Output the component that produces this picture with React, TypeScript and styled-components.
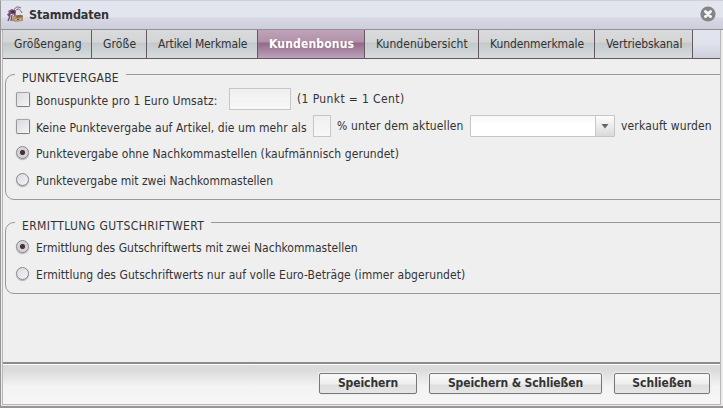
import React from "react";
import styled, { createGlobalStyle, css } from "styled-components";

const Global = createGlobalStyle`
  * { box-sizing: border-box; }
  html, body { margin: 0; width: 723px; height: 408px; overflow: hidden; }
  body { font: 12px/15px "DejaVu Sans Condensed", "DejaVu Sans", sans-serif; font-stretch: condensed; color: #333; }
`;

const Dialog = styled.div`
  width: 723px;
  height: 408px;
  display: flex;
  flex-direction: column;
  overflow: hidden;
  background: #979595;
`;

const TitleBar = styled.header`
  height: 30px;
  flex: none;
  display: flex;
  align-items: center;
  padding: 0 7px 2px 6px;
  border-left: 1px solid #999;
  border-top: 1px solid #d0d0d8;
  border-bottom: 1px solid #909296;
  background: linear-gradient(#e3e5ee 0, #e2e4ee 16px, #d7d8e3 17px, #cdcedb 28px);
`;

const Title = styled.h1`
  flex: 1;
  margin: 1px 0 0 5px;
  font-size: 12.5px;
  line-height: 16px;
  font-weight: bold;
  letter-spacing: -0.12px;
`;

const Frame = styled.div`
  height: 376px;
  flex: none;
  display: flex;
  padding: 0 2px 1px 1px;
  margin: 0 0 0 1px;
  background: #ececec;
`;

const Body = styled.div`
  flex: 1;
  min-width: 0;
  display: flex;
  flex-direction: column;
  border: 1px solid #b8b8b8;
  border-top: 0;
  background: #efefef;
  overflow: hidden;
`;

const Tabs = styled.nav`
  height: 29px;
  flex: none;
  display: flex;
  border-bottom: 1px solid #665860;
  background: linear-gradient(#e3e5ee 0, #e0e2ec 13px, #cdcfdb 28px);
`;

const Tab = styled.div<{ $w: number; $ls: number; $active?: boolean }>`
  width: ${(p) => p.$w}px;
  flex: none;
  padding: 7px 0 0 11px;
  border-right: 1px solid #665860;
  white-space: nowrap;
  letter-spacing: ${(p) => p.$ls}px;
  background: linear-gradient(#d8dadb 0, #d3d5d6 12px, #c3c9cb 13px, #d7dcdc 28px);
  ${(p) =>
    p.$active &&
    css`
      color: #fff;
      font-weight: bold;
      background: linear-gradient(#bfa2b9 0, #b191a8 12px, #946988 13px, #bba3bb 28px);
    `}
`;

const Content = styled.main`
  flex: 1;
  padding: 12px 0 0 2px;
`;

const Group = styled.fieldset<{ $h: number }>`
  position: relative;
  height: ${(p) => p.$h}px;
  width: 730px;
  margin: 0 0 19px;
  padding: 0 0 0 10px;
  border: 0;
  display: flex;
  flex-direction: column;
  &::before {
    content: "";
    position: absolute;
    inset: 3px 0 0 0;
    border: 1px solid #999;
    border-radius: 9px;
  }
`;

const Caption = styled.div<{ $w: number; $ls: number }>`
  position: relative;
  width: ${(p) => p.$w}px;
  height: 15px;
  flex: none;
  margin-bottom: 2px;
  padding-left: 7px;
  background: #efefef;
  letter-spacing: ${(p) => p.$ls}px;
  white-space: nowrap;
`;

const Line = styled.div`
  position: relative;
  height: 27px;
  flex: none;
  display: flex;
`;

const Text = styled.span<{ $w: number; $ls: number; $top?: number }>`
  width: ${(p) => p.$w}px;
  flex: none;
  padding-top: ${(p) => p.$top ?? 6}px;
  letter-spacing: ${(p) => p.$ls}px;
  white-space: nowrap;
`;

const Check = styled.i`
  width: 14px;
  height: 15px;
  flex: none;
  margin: 4px 6px 0 1px;
  border: 1px solid #7e8084;
  border-top-color: #a4a5a9;
  border-left-color: #97989c;
  border-radius: 2px;
  background: linear-gradient(135deg, #d9dadd, #f5f5f7);
  box-shadow: 0 0 1px #aaa;
`;

const Radio = styled.i<{ $on?: boolean }>`
  width: 13px;
  height: 13px;
  flex: none;
  margin: 4px 7px 0 1px;
  border: 1px solid #85868a;
  border-radius: 50%;
  background: ${(p) =>
    p.$on
      ? "radial-gradient(circle at 50% 50%, #3c363a 0 2.1px, #d5cbd2 3px, #dfd9de 6px)"
      : "linear-gradient(135deg, #d9dbdf, #f3f4f7)"};
  box-shadow: 0 1px 1px #aaa;
`;

const Field = styled.div<{ $w: number }>`
  width: ${(p) => p.$w}px;
  height: 22px;
  flex: none;
  margin-right: 6px;
  border: 1px solid #c6c6c6;
  background: linear-gradient(#efefef, #f8f8f8);
`;

const Select = styled(Field)`
  display: flex;
  justify-content: flex-end;
  border-radius: 1px;
  background: linear-gradient(#f7f7f7, #fff 9px);
`;

const Arrow = styled.span`
  width: 19px;
  border-left: 1px solid #c9c9c9;
  background: linear-gradient(#fdfdfd, #dadada);
  display: flex;
  align-items: center;
  justify-content: center;
`;

const Footer = styled.footer`
  height: 42px;
  flex: none;
  display: flex;
  gap: 12px;
  justify-content: flex-end;
  padding: 8px 10px 0 0;
  border-top: 2px solid #8c8c8c;
  box-shadow: inset 0 1px #fff;
  background: linear-gradient(#d9d9d9 0, #dcdcdc 7px, #f3f3f3 22px, #f6f6f6);
`;

const Button = styled.button<{ $w: number; $ls: number }>`
  width: ${(p) => p.$w}px;
  height: 21px;
  flex: none;
  margin: 1px 0 0;
  padding: 0;
  border: 1px solid #77787a;
  border-radius: 2px;
  background: linear-gradient(#fafafa, #eee 10px, #dedede 11px, #e6e6e6);
  box-shadow: 0 0 0 1px #eee;
  font: bold 12px/19px "DejaVu Sans Condensed", "DejaVu Sans", sans-serif;
  font-stretch: condensed;
  letter-spacing: ${(p) => p.$ls}px;
  color: #333;
  white-space: nowrap;
`;

const AntIcon = () => (
  <svg width="17" height="17" viewBox="0 0 17 17" fill="none">
    <path d="M7 5C8 1 10 0 14 2M8 6C10 1 13 3 15 7" stroke="#765472" strokeWidth="1" />
    <path d="M1 5L5 3L9 5L8.500 9L4 8L2 11L0.500 9L2 6Z" fill="#75506f" />
    <path d="M4 5L7 4.500L8 7L5 7Z" fill="#4f294c" />
    <path d="M0.500 8L3 10L1 15M5 9L4 15M8 8L6 15" stroke="#765070" strokeWidth="1.400" />
    <path d="M5 13L8 9L16 9V15L8 16Z" fill="#b39568" />
    <path d="M8 9C10 11 12 8 14 9L16 11L10 12Z" fill="#87654f" />
    <path d="M8 14L14 13" stroke="#d4bd91" />
    <path d="M10 13.500H12" stroke="#694b4c" />
  </svg>
);

const CloseIcon = () => (
  <svg width="16" height="16" viewBox="0 0 16 16">
    <circle cx="8" cy="8" r="7.600" fill="#858585" />
    <path d="M5.500 5.500L10.500 10.500M10.500 5.500L5.500 10.500" stroke="#f5f5f7" strokeWidth="3" strokeLinecap="round" />
  </svg>
);

const tabs: { label: string; w: number; ls: number; active?: boolean }[] = [
  { label: "Größengang", w: 89, ls: 0.1 },
  { label: "Größe", w: 55, ls: 0.15 },
  { label: "Artikel Merkmale", w: 111, ls: -0.13 },
  { label: "Kundenbonus", w: 107, ls: 0.18, active: true },
  { label: "Kundenübersicht", w: 114, ls: 0.05 },
  { label: "Kundenmerkmale", w: 116, ls: -0.08 },
  { label: "Vertriebskanal", w: 98, ls: -0.08 },
];

export default function App() {
  return (
    <Dialog>
      <Global />
      <TitleBar>
        <AntIcon />
        <Title>Stammdaten</Title>
        <CloseIcon />
      </TitleBar>
      <Frame>
        <Body>
          <Tabs>
            {tabs.map((t) => (
              <Tab key={t.label} $w={t.w} $ls={t.ls} $active={t.active}>
                {t.label}
              </Tab>
            ))}
          </Tabs>
          <Content>
            <Group $h={129}>
              <Caption $w={111} $ls={0.24}>PUNKTEVERGABE</Caption>
              <Line>
                <Check />
                <Text $w={193} $ls={0.12}>Bonuspunkte pro 1 Euro Umsatz:</Text>
                <Field $w={62} />
                <Text $w={120} $ls={0.38} $top={4}>(1 Punkt = 1 Cent)</Text>
              </Line>
              <Line>
                <Check />
                <Text $w={277} $ls={0.06}>Keine Punktevergabe auf Artikel, die um mehr als</Text>
                <Field $w={18} />
                <Text $w={133} $ls={0.14} $top={4}>% unter dem aktuellen</Text>
                <Select $w={145}>
                  <Arrow>
                    <svg width="8" height="5" viewBox="0 0 8 5">
                      <path d="M0.5 0H7.5L4 4.5Z" fill="#666" />
                    </svg>
                  </Arrow>
                </Select>
                <Text $w={95} $ls={0.16} $top={4}>verkauft wurden</Text>
              </Line>
              <Line>
                <Radio $on />
                <Text $w={400} $ls={0.07} $top={5}>Punktevergabe ohne Nachkommastellen (kaufmännisch gerundet)</Text>
              </Line>
              <Line>
                <Radio />
                <Text $w={400} $ls={0} $top={5}>Punktevergabe mit zwei Nachkommastellen</Text>
              </Line>
            </Group>
            <Group $h={75}>
              <Caption $w={196} $ls={0.4}>ERMITTLUNG GUTSCHRIFTWERT</Caption>
              <Line>
                <Radio $on />
                <Text $w={400} $ls={0.01} $top={5}>Ermittlung des Gutschriftwerts mit zwei Nachkommastellen</Text>
              </Line>
              <Line>
                <Radio />
                <Text $w={500} $ls={0.065} $top={5}>Ermittlung des Gutschriftwerts nur auf volle Euro-Beträge (immer abgerundet)</Text>
              </Line>
            </Group>
          </Content>
          <Footer>
            <Button $w={98} $ls={-0.08}>Speichern</Button>
            <Button $w={173} $ls={-0.1}>Speichern &amp; Schließen</Button>
            <Button $w={96} $ls={0}>Schließen</Button>
          </Footer>
        </Body>
      </Frame>
    </Dialog>
  );
}
